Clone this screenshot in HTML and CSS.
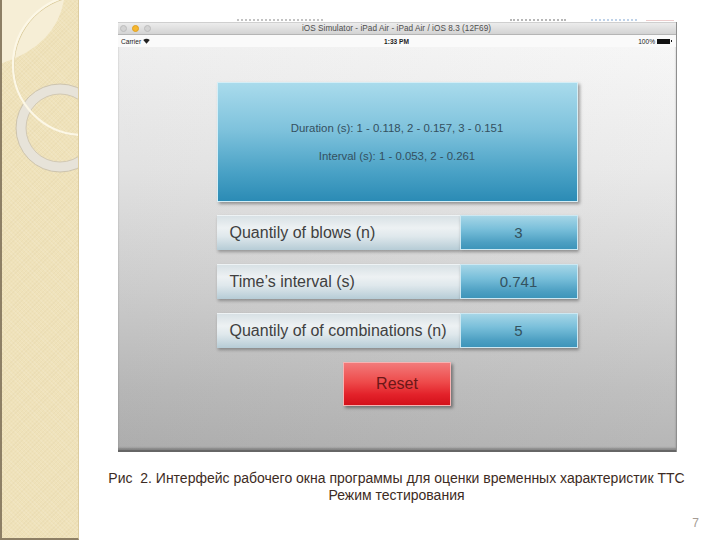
FILE: index.html
```html
<!DOCTYPE html>
<html lang="ru">
<head>
<meta charset="utf-8">
<title>Рис 2</title>
<link rel="stylesheet" href="styles.css">
</head>
<body>
<div class="slide">
  <aside class="deco">
    <svg class="deco-art" width="79" height="540" viewBox="0 0 79 540" xmlns="http://www.w3.org/2000/svg">
      <path d="M0 0 H64 Q56 46 0 64 Z" fill="#f6eed6"/>
      <circle cx="60" cy="128" r="39" fill="none" stroke="#e7e3d9" stroke-width="10"/>
      <circle cx="60" cy="128" r="44" fill="none" stroke="#cdc4ae" stroke-width="1"/>
      <circle cx="60" cy="128" r="34" fill="none" stroke="#d2c9b4" stroke-width="1"/>
      <circle cx="84" cy="66" r="70" fill="none" stroke="#dccd9f" stroke-width="1"/>
      <circle cx="83" cy="65" r="70" fill="none" stroke="#fcf7e6" stroke-width="2.2"/>
    </svg>
  </aside>
  <main class="content">
    <div class="topfrag">
      <span class="frag frag-dots"></span>
      <span class="frag frag-text"></span>
      <span class="frag frag-blue"></span>
      <span class="frag frag-red"></span>
    </div>
    <section class="sim">
      <div class="titlebar">
        <span class="lights"><i class="light"></i><i class="light light-orange"></i><i class="light"></i></span>
        <span class="title">iOS Simulator - iPad Air - iPad Air / iOS 8.3 (12F69)</span>
      </div>
      <div class="statusbar">
        <span class="carrier">Carrier
          <svg class="wifi" width="7" height="6" viewBox="0 0 14 11" xmlns="http://www.w3.org/2000/svg"><path d="M7 11 L0.5 3.6 A10 10 0 0 1 13.5 3.6 Z" fill="#222"/></svg>
        </span>
        <span class="time">1:33 PM</span>
        <span class="batt">100% <i class="battery"></i></span>
      </div>
      <div class="screen">
        <div class="panel">
          <p>Duration (s): 1 - 0.118, 2 - 0.157, 3 - 0.151</p>
          <p>Interval (s): 1 - 0.053, 2 - 0.261</p>
        </div>
        <div class="row"><div class="label">Quantily of blows (n)</div><div class="value">3</div></div>
        <div class="row"><div class="label">Time’s interval (s)</div><div class="value">0.741</div></div>
        <div class="row"><div class="label">Quantily of of combinations (n)</div><div class="value">5</div></div>
        <button class="reset" type="button">Reset</button>
      </div>
    </section>
    <div class="caption">
      <p>Рис&nbsp; 2. Интерфейс рабочего окна программы для оценки временных характеристик ТТС</p>
      <p>Режим тестирования</p>
    </div>
    <div class="pagenum">7</div>
  </main>
</div>
</body>
</html>
```
FILE: styles.css
```css
* { box-sizing: border-box; }
html, body { margin: 0; padding: 0; background: #ffffff; }
body { font-family: "Liberation Sans", Arial, sans-serif; }

.slide {
  width: 720px;
  height: 540px;
  display: flex;
  overflow: hidden;
  background: #ffffff;
}

.deco {
  width: 79px;
  flex: 0 0 79px;
  height: 540px;
  background-color: #efe2ba;
  background-image:
    repeating-linear-gradient(45deg, rgba(255,255,255,0.10) 0 1px, transparent 1px 3px),
    repeating-linear-gradient(-45deg, rgba(200,180,130,0.10) 0 1px, transparent 1px 3px);
  border-left: 2px solid #8d7f65;
  border-right: 1px solid #dccca0;
  border-bottom: 2px solid #8d7f65;
  overflow: hidden;
}
.deco-art { display: block; margin-left: -2px; }

.content {
  flex: 1;
  display: flex;
  flex-direction: column;
}

.topfrag {
  height: 22px;
  display: flex;
  align-items: flex-end;
  padding-left: 158px;
  padding-bottom: 1px;
}
.frag { display: block; height: 2px; opacity: 0.35; }
.frag-dots { width: 86px; border-top: 2px dotted #555; }
.frag-text { width: 56px; margin-left: 187px; border-top: 2px dotted #333; }
.frag-blue { width: 46px; margin-left: 25px; border-top: 2px dotted #4a7fc0; }
.frag-red { width: 28px; margin-left: 9px; height: 1px; background: #c87070; }

.sim {
  margin-left: 39px;
  width: 559px;
  height: 430px;
  display: flex;
  flex-direction: column;
  border-right: 1px solid #8e8e8e;
}

.titlebar {
  height: 13px;
  background: linear-gradient(#ececec, #d3d3d3);
  border-top: 1px solid #cfcfcf;
  border-bottom: 1px solid #b5b5b5;
  display: flex;
  align-items: center;
}
.lights { display: flex; gap: 5px; padding-left: 2px; }
.light {
  display: block;
  width: 7px; height: 7px;
  border-radius: 50%;
  background: #d3d3d3;
  border: 1px solid #bdbdbd;
}
.light-orange { background: #f6b72f; border-color: #e0a020; }
.title {
  flex: 1;
  text-align: center;
  font-size: 8.2px;
  color: #4e4e4e;
  margin-right: 34px;
  letter-spacing: 0.05px;
}

.statusbar {
  height: 12px;
  background: #fafafa;
  display: grid;
  grid-template-columns: 1fr auto 1fr;
  align-items: center;
  font-size: 6.6px;
  color: #222;
  padding: 0 4px 0 3px;
}
.carrier { display: flex; align-items: center; gap: 2px; }
.wifi { display: block; }
.time { font-weight: bold; }
.batt { justify-self: end; display: flex; align-items: center; gap: 2px; }
.battery {
  display: block;
  width: 13px; height: 5px;
  background: #111;
  position: relative;
  margin-right: 2px;
}
.battery::after {
  content: "";
  position: absolute;
  right: -2px; top: 1.5px;
  width: 1.5px; height: 2px;
  background: #111;
}

.screen {
  flex: 1;
  display: flex;
  flex-direction: column;
  align-items: center;
  padding-top: 35px;
  background:
    linear-gradient(to right, rgba(0,0,0,0.03), rgba(255,255,255,0.06)),
    linear-gradient(#f6f6f6 0%, #e9e9e9 30%, #d2d2d2 60%, #bcbcbc 85%, #b2b2b2 100%);
  border-bottom: 2px solid #666;
  box-shadow: inset 0 -2px 2px rgba(0,0,0,0.25);
}

.panel {
  width: 361px;
  height: 120px;
  background: linear-gradient(#a9dbec 0%, #7ec2dc 40%, #4aa2c6 75%, #2b8bb5 100%);
  border: 1px solid #d5eef6;
  box-shadow: 2px 2px 3px rgba(0,0,0,0.35);
  display: flex;
  flex-direction: column;
  justify-content: center;
  align-items: center;
  gap: 14px;
}
.panel p {
  margin: 0;
  font-size: 11.4px;
  color: #34505f;
  line-height: 14px;
}

.row {
  width: 361px;
  height: 35px;
  display: flex;
  margin-top: 13px;
}
.row + .row { margin-top: 14px; }
.label {
  width: 243px;
  height: 100%;
  background: linear-gradient(#d8e1e5 0%, #edf1f3 35%, #dfe8ec 60%, #b6ccd6 100%);
  border-top: 1px solid #eef3f5;
  box-shadow: 1px 2px 3px rgba(0,0,0,0.3);
  display: flex;
  align-items: center;
  padding-left: 13px;
  font-size: 16px;
  color: #404040;
}
.value {
  width: 118px;
  height: 100%;
  background: linear-gradient(#a6d6e7 0%, #79bfda 40%, #4c9fc2 80%, #3d95ba 100%);
  border: 1px solid #cde8f2;
  box-shadow: 1px 2px 3px rgba(0,0,0,0.35);
  display: flex;
  align-items: center;
  justify-content: center;
  font-size: 15px;
  color: #34525f;
}

.reset {
  margin-top: 14px;
  width: 108px;
  height: 44px;
  background: linear-gradient(#f27a7a 0%, #ee4b4b 45%, #e3222a 75%, #d3101a 100%);
  border: 1px solid #f7b3b3;
  box-shadow: 2px 2px 3px rgba(0,0,0,0.4);
  font-family: "Liberation Sans", Arial, sans-serif;
  font-size: 16px;
  color: #6b1717;
  padding: 0;
  border-radius: 0;
}

.caption {
  margin-top: 18px;
  width: 599px;
  margin-left: 18px;
  text-align: center;
  font-size: 14px;
  line-height: 17px;
  color: #3d2b23;
}
.caption p { margin: 0; }

.pagenum {
  margin-top: 12px;
  align-self: flex-end;
  margin-right: 21px;
  font-size: 12px;
  line-height: 14px;
  color: #a59c94;
}
```
